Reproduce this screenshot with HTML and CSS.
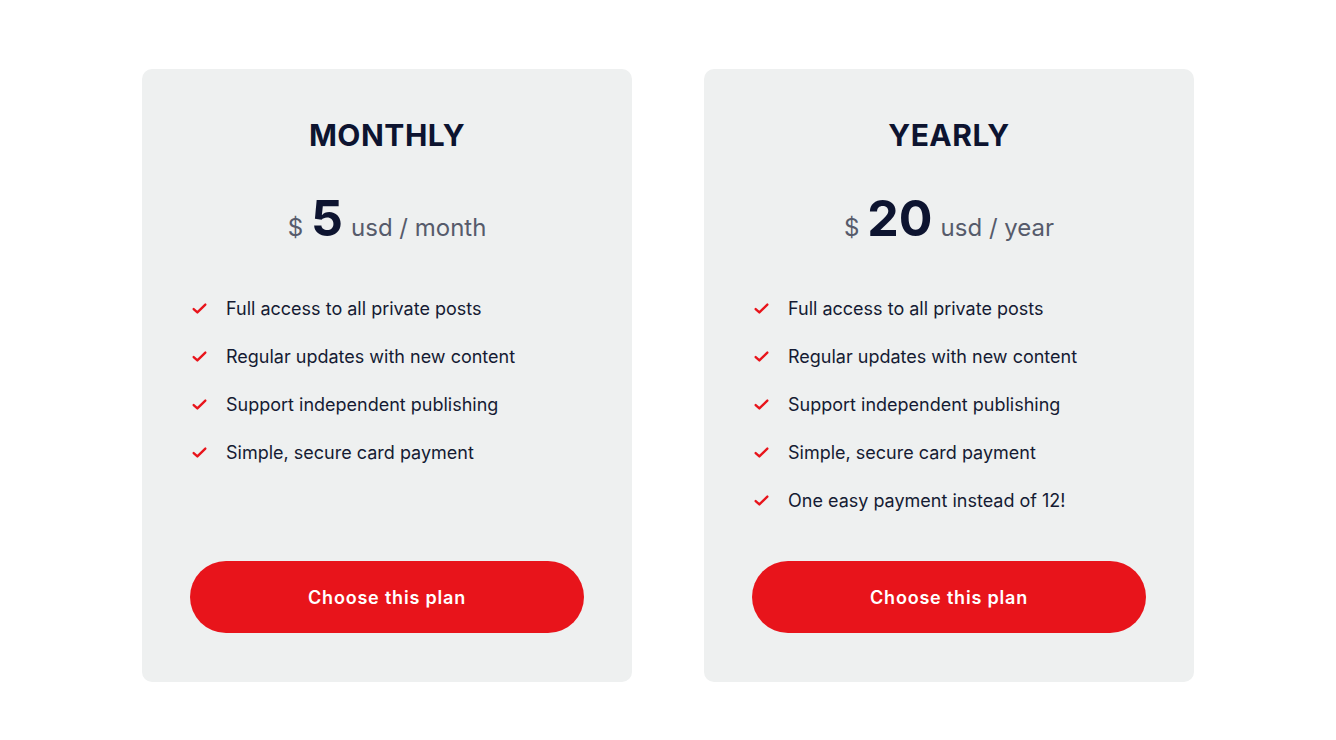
FILE: index.html
```html
<!DOCTYPE html>
<html lang="en">

<head>
    <meta charset="UTF-8">
    <meta name="viewport" content="width=device-width, initial-scale=1.0">
    <title>Plans</title>
    <link rel="stylesheet" href="styles.css">
</head>

<body>
    <div class="plans">
        <div class="plan">
            <h2 class="plan-name">MONTHLY</h2>
            <div class="price">
                <span class="currency">$</span>
                <span class="amount">5</span>
                <span class="period">usd / month</span>
            </div>
            <ul class="features">
                <li><svg class="check" viewBox="0 0 16 16"><path d="M2.5 8.5l3.5 3.2 7.5-7.4" /></svg>Full access to all private posts</li>
                <li><svg class="check" viewBox="0 0 16 16"><path d="M2.5 8.5l3.5 3.2 7.5-7.4" /></svg>Regular updates with new content</li>
                <li><svg class="check" viewBox="0 0 16 16"><path d="M2.5 8.5l3.5 3.2 7.5-7.4" /></svg>Support independent publishing</li>
                <li><svg class="check" viewBox="0 0 16 16"><path d="M2.5 8.5l3.5 3.2 7.5-7.4" /></svg>Simple, secure card payment</li>
            </ul>
            <a class="btn" href="#">Choose this plan</a>
        </div>

        <div class="plan">
            <h2 class="plan-name">YEARLY</h2>
            <div class="price">
                <span class="currency">$</span>
                <span class="amount">20</span>
                <span class="period">usd / year</span>
            </div>
            <ul class="features">
                <li><svg class="check" viewBox="0 0 16 16"><path d="M2.5 8.5l3.5 3.2 7.5-7.4" /></svg>Full access to all private posts</li>
                <li><svg class="check" viewBox="0 0 16 16"><path d="M2.5 8.5l3.5 3.2 7.5-7.4" /></svg>Regular updates with new content</li>
                <li><svg class="check" viewBox="0 0 16 16"><path d="M2.5 8.5l3.5 3.2 7.5-7.4" /></svg>Support independent publishing</li>
                <li><svg class="check" viewBox="0 0 16 16"><path d="M2.5 8.5l3.5 3.2 7.5-7.4" /></svg>Simple, secure card payment</li>
                <li><svg class="check" viewBox="0 0 16 16"><path d="M2.5 8.5l3.5 3.2 7.5-7.4" /></svg>One easy payment instead of 12!</li>
            </ul>
            <a class="btn" href="#">Choose this plan</a>
        </div>
    </div>
</body>

</html>
```

FILE: styles.css
```css
body {
    font-family: 'Inter', 'Liberation Sans', sans-serif;
    background: #fff;
    color: #151b33;
    margin: 0;
    padding: 69px 0 58px;
}

.plans {
    display: flex;
    justify-content: center;
    gap: 72px;
}

.plan {
    width: 490px;
    box-sizing: border-box;
    background-color: #eef0f0;
    border-radius: 10px;
    padding: 46px 48px 49px;
    display: flex;
    flex-direction: column;
}

.plan-name {
    margin: 0;
    text-align: center;
    font-size: 30px;
    line-height: 40px;
    font-weight: 700;
    letter-spacing: 0.5px;
    color: #0d1430;
}

.price {
    margin-top: 35px;
    display: flex;
    justify-content: center;
    align-items: baseline;
    gap: 8px;
    color: #565b6b;
    font-size: 24px;
}

.amount {
    font-size: 50px;
    line-height: 56px;
    font-weight: 700;
    color: #0d1430;
}

.features {
    list-style: none;
    margin: 38px 0 0;
    padding: 0;
}

.features li {
    display: flex;
    align-items: center;
    height: 48px;
    font-size: 18px;
    color: #151b33;
}

.check {
    width: 17px;
    height: 17px;
    margin-left: 1px;
    margin-right: 18px;
    fill: none;
    stroke: #e8141b;
    stroke-width: 2.2;
    stroke-linecap: round;
    stroke-linejoin: round;
}

.btn {
    margin-top: auto;
    display: flex;
    align-items: center;
    justify-content: center;
    height: 72px;
    border-radius: 36px;
    background-color: #e8141b;
    color: #fff;
    text-decoration: none;
    font-size: 18px;
    font-weight: 600;
    letter-spacing: 0.8px;
}

.plans .plan:last-child .btn {
    margin-top: 37px;
}
```
